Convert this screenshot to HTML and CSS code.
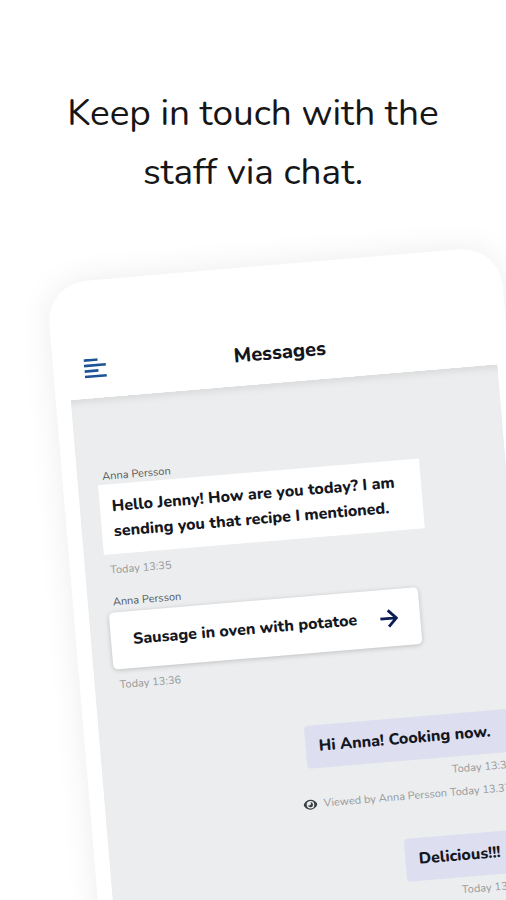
FILE: index.html
```html
<!DOCTYPE html>
<html lang="en">
<head>
  <meta charset="utf-8">
  <meta name="viewport" content="width=device-width, initial-scale=1">
  <title>Messages</title>
  <link rel="stylesheet" href="styles.css">
</head>
<body>
  <main class="stage">
    <h1 class="headline">Keep in touch with the<br>staff via chat.</h1>
    <section class="phone">
      <header class="topbar">
        <button class="menu" type="button" aria-label="Menu">
          <svg width="22" height="20" viewBox="0 0 22 20" fill="none" stroke="#1d5496" stroke-width="2.6">
            <path d="M0 1.500H14M0 7H22M0 12.500H14M0 18H22"/>
          </svg>
        </button>
        <h2 class="title">Messages</h2>
      </header>
      <div class="chat">
        <article class="message">
          <p class="sender">Anna Persson</p>
          <p class="bubble">Hello Jenny! How are you today? I am<br>sending you that recipe I mentioned.</p>
          <p class="time">Today 13:35</p>
        </article>
        <article class="message">
          <p class="sender">Anna Persson</p>
          <a class="card" href="#recipe">
            <span>Sausage in oven with potatoe</span>
            <svg width="18" height="20" viewBox="0 0 18 20" fill="none" stroke="#0c1c54" stroke-width="2.8">
              <path d="M0 10H16M8.200 1.800L16.200 10L8.200 18.200"/>
            </svg>
          </a>
          <p class="time">Today 13:36</p>
        </article>
        <article class="message own">
          <p class="bubble">Hi Anna! Cooking now.</p>
          <p class="time">Today 13:37</p>
          <p class="viewed">
            <svg width="14" height="12" viewBox="0 0 14 12">
              <path fill="#3c3f44" fill-rule="evenodd" d="M7 1C3.800 1 1.200 3 0 6c1.200 3 3.800 5 7 5s5.800-2 7-5C12.800 3 10.200 1 7 1ZM7 2.200A3.800 3.800 0 1 1 7 9.800A3.800 3.800 0 1 1 7 2.200Z"/>
              <path fill="#3c3f44" d="M7 3.500A2.500 2.500 0 1 1 4.500 6A1.500 1.500 0 0 0 7 3.500Z"/>
            </svg>
            <span>Viewed by Anna Persson Today 13.37</span>
          </p>
        </article>
        <article class="message own">
          <p class="bubble">Delicious!!!</p>
          <p class="time">Today 13:38</p>
        </article>
      </div>
    </section>
  </main>
</body>
</html>
```
FILE: styles.css
```css
* {
  box-sizing: border-box;
}

body,
h1,
h2,
p {
  margin: 0;
}

body {
  background: #fff;
  color: #14171f;
  font-family: Nunito, Lato, "Open Sans", sans-serif;
}

.stage {
  height: 100vh;
  overflow: hidden;
}

.headline {
  padding-top: 84px;
  height: 284px;
  font-size: 37px;
  font-weight: 400;
  line-height: 59px;
  text-align: center;
  color: #161616;
}

.phone {
  width: 90%;
  margin-left: 46px;
  padding: 0 12px 0 15px;
  border-radius: 40px 40px 0 0;
  background: #fff;
  box-shadow: 0 0 32px rgba(0, 0, 0, 0.08);
  transform: rotate(-4.8deg);
  transform-origin: top left;
}

.topbar {
  display: grid;
  grid-template-columns: 50px 1fr 70px;
  align-items: center;
  height: 118px;
  padding: 58px 0 0 16px;
}

.menu {
  display: flex;
  padding: 0;
  border: 0;
  background: none;
}

.title {
  font-size: 20px;
  font-weight: 800;
  line-height: 28px;
  text-align: center;
}

.chat {
  display: flex;
  flex-direction: column;
  gap: 16px;
  min-height: 640px;
  padding: 71px 12px 60px 20px;
  background: #ebedee;
  box-shadow: inset 0 8px 8px -6px rgba(0, 0, 0, 0.1);
}

.message {
  display: flex;
  flex-direction: column;
  align-items: flex-start;
}

.sender,
.time,
.viewed {
  font-size: 11px;
  line-height: 16px;
  color: #96989b;
}

.sender {
  padding-left: 5px;
  color: #55585c;
}

.time {
  margin-top: 8px;
  padding-left: 5px;
}

.bubble {
  padding: 10px 26px 10px 12px;
  background: #fff;
  font-size: 16px;
  font-weight: 800;
  line-height: 25px;
}

.card {
  display: flex;
  align-items: center;
  gap: 23px;
  margin-top: 2px;
  padding: 16px 22px;
  border-radius: 5px;
  background: #fff;
  box-shadow: 0 1px 5px rgba(0, 0, 0, 0.2);
  color: inherit;
  font-size: 16px;
  font-weight: 800;
  line-height: 25px;
  text-decoration: none;
}

.own {
  align-items: flex-end;
  padding-top: 32px;
}

.own + .own {
  padding-top: 18px;
}

.own .bubble {
  padding: 9px 26px 9px 13px;
  border-radius: 4px 0 0 4px;
  background: #dddef0;
}

.own .time {
  margin-top: 5px;
  padding-right: 6px;
}

.viewed {
  display: flex;
  align-items: center;
  gap: 6px;
  margin-top: 7px;
  padding-right: 10px;
  white-space: nowrap;
}
```
